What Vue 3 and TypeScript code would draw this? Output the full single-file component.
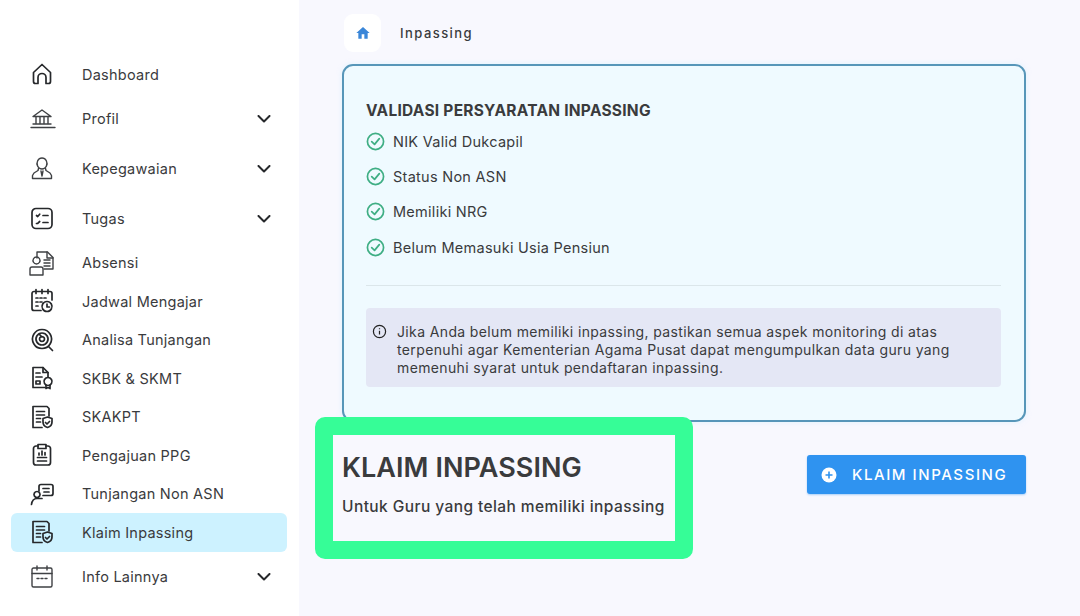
<script setup lang="ts">
interface NavItem {
  label: string;
  icon: string[];
  expandable?: boolean;
  active?: boolean;
  thin?: boolean;
}

const navItems: NavItem[] = [
  { label: 'Dashboard', icon: ['M5.500 12.500 14 4.500l8.500 8V21.500a2 2 0 0 1-2 2H18V17.500a4 4 0 0 0-8 0v6H7.500a2 2 0 0 1-2-2Z'] },
  {
    label: 'Profil',
    expandable: true,
    thin: true,
    icon: ['M5 11.500 14 5l9 6.500Z', 'M8 12v6.500M12 12v6.500M16 12v6.500M20 12v6.500', 'M5 19h18', 'M3 22.500h24'],
  },
  {
    label: 'Kepegawaian',
    expandable: true,
    thin: true,
    icon: ['M14 3a5 5.500 0 1 0 .01 0Z', 'M10.500 13.500 10 15.500l-4 2.500-1.500 2.500v3h19v-3L22 18l-4-2.500-.5-2', 'M13 16l1 5 1-5'],
  },
  {
    label: 'Tugas',
    expandable: true,
    icon: ['M8 3.500h12a4 4 0 0 1 4 4v12a4 4 0 0 1-4 4H8a4 4 0 0 1-4-4v-12a4 4 0 0 1 4-4Z', 'M8.500 10.500l1.200 1 2-2.300M15 10.500h5M8.500 18.500l1.200-.2 2-1.800M15 17.500h5'],
  },
  {
    label: 'Absensi',
    thin: true,
    icon: ['M9 9V3h10.500l5.500 5.500V20H16', 'M19 3v6h6', 'M16 11h6M16 14h6M16 17h6', 'M8.500 8a3.500 3.500 0 1 0 .01 0Z', 'M2 26v-6a2 2 0 0 1 2-2h9a2 2 0 0 1 2 2v6Z'],
  },
  {
    label: 'Jadwal Mengajar',
    icon: ['M13 23.500H6a2 2 0 0 1-2-2V6.500a2 2 0 0 1 2-2h16a2 2 0 0 1 2 2V13', 'M8 2.500v4M14 2.500v4M20 2.500v4', 'M8 11h2M12 11h2M16 11h2M8 15h2M12 15h2M8 19h2', 'M19 14.500a5 5 0 1 0 .01 0Z', 'M19 17v3h2.500'],
  },
  {
    label: 'Analisa Tunjangan',
    icon: ['M14 3.500a9.500 9.500 0 1 0 .01 0Z', 'M14 7a6 6 0 1 0 .01 0Z', 'M14 10.500a2.500 2.500 0 1 0 .01 0Z', 'M11.500 8.500 14 11', 'M20.500 20.500l4 4'],
  },
  {
    label: 'SKBK & SKMT',
    icon: ['M17 23.500H5V3.500h10l5 5V13', 'M15 3.500v5h5', 'M8 9h4M8 13h6M8 17h4v3H8Z', 'M20 13.500a4 4 0 1 0 .01 0Z', 'M18 21v3.500l2-1 2 1V21'],
  },
  {
    label: 'SKAKPT',
    icon: ['M14 24.500H5V3.500h14l2 2V13', 'M8.500 8.500h8M8.500 12h8M8.500 15.500h4M8.500 19h4', 'M19.500 14l4.500 1.500v3.500c0 3-2 4.700-4.500 5.500-2.500-.8-4.500-2.500-4.500-5.500v-3.500Z', 'M17.500 19.500l1.500 1.500 2.500-2.500'],
  },
  {
    label: 'Pengajuan PPG',
    icon: ['M10 5H8a2.500 2.500 0 0 0-2.500 2.500v14A2.500 2.500 0 0 0 8 24h12a2.500 2.500 0 0 0 2.500-2.500v-14A2.500 2.500 0 0 0 20 5h-2', 'M10 3.500h8v4h-8Z', 'M11 14v-2M14 14v-4M17 14v-2.500', 'M9.500 16.500h9M9.500 20h9'],
  },
  {
    label: 'Tunjangan Non ASN',
    icon: ['M11 11V6.500a2 2 0 0 1 2-2h10a2 2 0 0 1 2 2v7a2 2 0 0 1-2 2h-8', 'M15 8.500h6M16 12h5', 'M9 11.500a3 3 0 1 0 .01 0Z', 'M3.500 24.500c.5-4 2.500-6 5.500-6h5'],
  },
  {
    label: 'Klaim Inpassing',
    active: true,
    icon: ['M14 24.500H5V3.500h14l2 2V13', 'M8.500 8.500h8M8.500 12h8M8.500 15.500h4M8.500 19h4', 'M19.500 14l4.500 1.500v3.500c0 3-2 4.700-4.500 5.500-2.500-.8-4.500-2.500-4.500-5.500v-3.500Z', 'M17.500 19.500l1.500 1.500 2.500-2.500'],
  },
  {
    label: 'Info Lainnya',
    expandable: true,
    thin: true,
    icon: ['M5.500 5h17a1.500 1.500 0 0 1 1.500 1.500v16a1.500 1.500 0 0 1-1.500 1.500h-17A1.500 1.500 0 0 1 4 22.500v-16A1.500 1.500 0 0 1 5.500 5Z', 'M4 10.500h20', 'M9 3v4M19 3v4', 'M9 15.500h2M13 15.500h2M17 15.500h2'],
  },
];

const requirements = ['NIK Valid Dukcapil', 'Status Non ASN', 'Memiliki NRG', 'Belum Memasuki Usia Pensiun'];
</script>

<template>
  <div class="page">
    <aside class="sidebar">
      <nav class="nav">
        <a
          v-for="item in navItems"
          :key="item.label"
          class="nav-item"
          :class="{ tall: item.expandable, active: item.active }"
        >
          <svg class="nav-icon" :class="{ thin: item.thin }" viewBox="0 0 28 28" fill="none">
            <path v-for="d in item.icon" :key="d" :d="d" />
          </svg>
          <span class="nav-label">{{ item.label }}</span>
          <svg v-if="item.expandable" class="chevron" viewBox="0 0 14 8" fill="none">
            <path d="M1.500 1 7 6.500 12.500 1" />
          </svg>
        </a>
      </nav>
    </aside>

    <main class="main">
      <div class="breadcrumb">
        <span class="crumb-home">
          <svg viewBox="0 0 24 24" width="16" height="16">
            <path d="M10 20.500v-6.500h4v6.500h5v-8.500h3L12 3 2 12h3v8.500Z" fill="#3a86d8" />
          </svg>
        </span>
        <span class="crumb-text">Inpassing</span>
      </div>

      <section class="card">
        <h2 class="card-title">VALIDASI PERSYARATAN INPASSING</h2>
        <ul class="req-list">
          <li v-for="req in requirements" :key="req" class="req">
            <svg viewBox="0 0 20 20" width="19" height="19" fill="none">
              <circle cx="10" cy="10" r="8.500" stroke="#3fae84" stroke-width="1.800" />
              <path d="M6 10.200 9 13l5-6" stroke="#3fae84" stroke-width="1.800" stroke-linecap="round" stroke-linejoin="round" />
            </svg>
            <span>{{ req }}</span>
          </li>
        </ul>
        <hr class="divider" />
        <div class="note">
          <svg class="note-icon" viewBox="0 0 16 16" width="15" height="15" fill="none">
            <circle cx="8" cy="8" r="6.500" stroke="#222" stroke-width="1.300" />
            <path d="M8 7.200v4M8 4.600v1" stroke="#222" stroke-width="1.300" />
          </svg>
          <p>Jika Anda belum memiliki inpassing, pastikan semua aspek monitoring di atas terpenuhi agar Kementerian Agama Pusat dapat mengumpulkan data guru yang memenuhi syarat untuk pendaftaran inpassing.</p>
        </div>
      </section>

      <section class="claim">
        <div class="claim-text">
          <h1>KLAIM INPASSING</h1>
          <p>Untuk Guru yang telah memiliki inpassing</p>
          <div class="highlight"></div>
        </div>
        <button class="claim-btn" type="button">
          <svg viewBox="0 0 16 16" width="16" height="16">
            <circle cx="8" cy="8" r="7.500" fill="#fff" />
            <path d="M8 4.500v7M4.500 8h7" stroke="#2f93f0" stroke-width="1.600" />
          </svg>
          <span>KLAIM INPASSING</span>
        </button>
      </section>
    </main>
  </div>
</template>

<style scoped>
.page {
  display: flex;
  width: 1080px;
  height: 616px;
  overflow: hidden;
  background: #f8f8fe;
  font-family: Inter, "Open Sans", sans-serif;
  color: #3a3b3d;
}

.sidebar {
  width: 299px;
  flex-shrink: 0;
  background: #fff;
  padding: 55px 12px 0 11px;
  box-sizing: border-box;
}

.nav {
  display: flex;
  flex-direction: column;
}

.nav-item {
  display: flex;
  align-items: center;
  height: 38.5px;
  padding: 0 16px 0 17px;
  border-radius: 6px;
}

.nav-item.tall {
  height: 50px;
}

.nav-item.active {
  background: #cdf2ff;
}

.nav-icon {
  width: 28px;
  height: 28px;
  flex-shrink: 0;
  stroke: #26282b;
  stroke-width: 1.700;
  stroke-linejoin: round;
  stroke-linecap: round;
}

.nav-icon.thin {
  stroke: #3f4144;
  stroke-width: 1.400;
}

.nav-label {
  margin-left: 26px;
  flex: 1;
  font-size: 14.5px;
  letter-spacing: 0.25px;
}

.chevron {
  width: 14px;
  height: 8px;
  stroke: #26282b;
  stroke-width: 2;
  stroke-linecap: round;
  stroke-linejoin: round;
}

.main {
  flex: 1;
  min-width: 0;
  padding: 14px 54px 0 43px;
  display: flex;
  flex-direction: column;
}

.breadcrumb {
  display: flex;
  align-items: center;
  height: 38px;
  margin-left: 2px;
}

.crumb-home {
  display: flex;
  align-items: center;
  justify-content: center;
  width: 37px;
  height: 38px;
  background: #fff;
  border-radius: 9px;
}

.crumb-text {
  margin-left: 19px;
  font-size: 13px;
  font-weight: 500;
  letter-spacing: 1.45px;
}

.card {
  margin-top: 12px;
  height: 358px;
  box-sizing: border-box;
  padding: 35px 23px 0 22px;
  background: #effaff;
  border: 2px solid #5796b9;
  border-radius: 11px;
  box-shadow: 0 0 5px rgba(200, 240, 255, 0.5);
}

.card-title {
  margin: 0;
  font-size: 15.5px;
  line-height: 20px;
  font-weight: 700;
  letter-spacing: 0.25px;
}

.req-list {
  list-style: none;
  margin: 2.500px 0 0;
  padding: 0;
}

.req {
  display: flex;
  align-items: center;
  gap: 8px;
  height: 35.300px;
  font-size: 14.5px;
  letter-spacing: 0.27px;
}

.divider {
  margin: 20.500px 0 0;
  border: 0;
  border-top: 1px solid #dbe6ea;
}

.note {
  display: flex;
  gap: 10px;
  margin-top: 22px;
  height: 79px;
  box-sizing: border-box;
  padding: 15px 20px 0 6px;
  background: #e4e7f5;
  border-radius: 4px;
}

.note-icon {
  flex-shrink: 0;
  margin-top: 1px;
}

.note p {
  margin: 0;
  font-size: 14px;
  line-height: 18px;
  letter-spacing: 0.37px;
}

.claim {
  display: flex;
  justify-content: space-between;
  align-items: flex-start;
  margin-top: 28px;
}

.claim-text {
  position: relative;
}

.claim-text h1 {
  margin: 0;
  font-size: 27px;
  line-height: 36px;
  font-weight: 600;
  letter-spacing: 0.05px;
}

.claim-text p {
  margin: 11px 0 0;
  font-size: 15.5px;
  line-height: 20px;
  font-weight: 500;
  letter-spacing: 0.42px;
}

/* annotation frame drawn on top of the heading */
.highlight {
  position: absolute;
  left: -27px;
  top: -33px;
  width: 378px;
  height: 142px;
  box-sizing: border-box;
  border: 18px solid #36fd97;
  border-radius: 10px;
  background: transparent;
}

.claim-btn {
  display: flex;
  align-items: center;
  gap: 15px;
  width: 219px;
  height: 39px;
  margin-top: 5px;
  padding: 0 0 0 14px;
  box-sizing: border-box;
  border: 0;
  border-radius: 3px;
  background: #2f93f0;
  box-shadow: 0 1px 2px rgba(47, 147, 240, 0.4);
  color: #fff;
  font-family: inherit;
  font-size: 15px;
  font-weight: 500;
  letter-spacing: 1.57px;
}
</style>

<style>
html,
body {
  margin: 0;
}
</style>
